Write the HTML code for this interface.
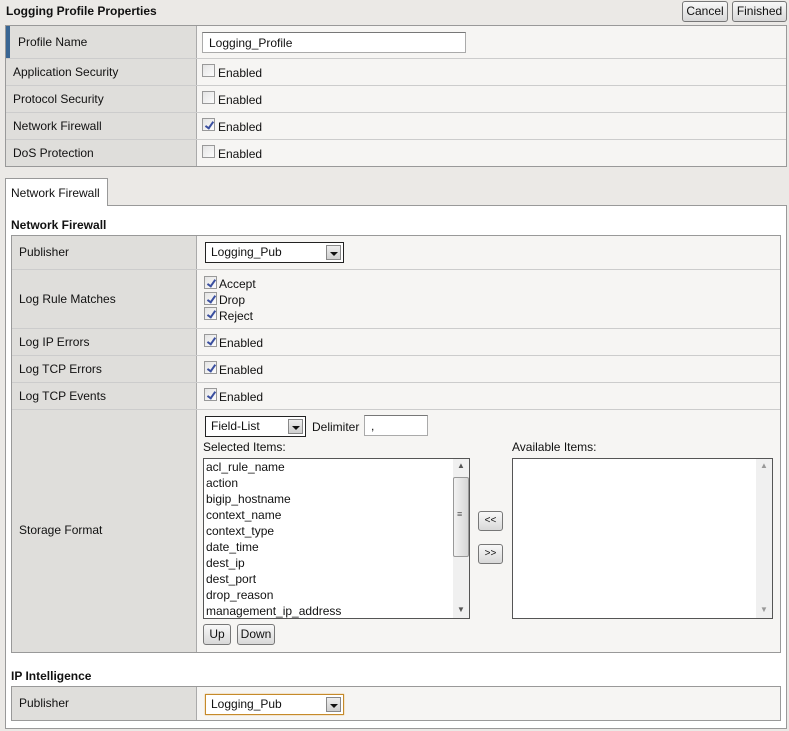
<!DOCTYPE html>
<html><head><meta charset="utf-8"><style>
*{box-sizing:border-box;margin:0;padding:0}
body{width:789px;height:731px;background:#ebe9e6;font-family:"Liberation Sans",Arial,sans-serif;font-size:12px;color:#111;position:relative;overflow:hidden}
.a{position:absolute}
.t{position:absolute;white-space:nowrap}
.btn{position:absolute;border:1px solid #777;border-radius:3px;background:linear-gradient(#f8f8f8,#d8d8d8);font-size:12px;text-align:center;line-height:18px;color:#111}
.cb{position:absolute;width:13px;height:13px;border:1px solid #999;background:linear-gradient(135deg,#e4e4e4,#fcfcfc)}
.cb.on::after{content:"";position:absolute;left:4px;top:1px;width:3px;height:7px;border:solid #3a4f9f;border-width:0 2px 2px 0;transform:rotate(35deg)}
.sel{position:absolute;border:1px solid #222;background:#fff;padding-left:5px;line-height:18px}
.sel .ar{position:absolute;right:2px;top:2px;width:15px;bottom:2px;background:linear-gradient(#eee,#cfcfcf);border:1px solid #888}
.sel .ar::after{content:"";position:absolute;left:3px;top:6px;border:4px solid transparent;border-top:4px solid #111;border-bottom:0}
.hl{position:absolute;height:1px;background:#ccc}
</style></head><body>
<div class="t" style="left:6px;top:4px;font-weight:bold">Logging Profile Properties</div>
<div class="btn" style="left:682px;top:1px;width:46px;height:21px">Cancel</div>
<div class="btn" style="left:732px;top:1px;width:55px;height:21px">Finished</div>

<div class="a" style="left:5px;top:25px;width:782px;height:142px;border:1px solid #999;background:#f6f5f3"></div>
<div class="a" style="left:6px;top:26px;width:191px;height:140px;background:#dfdedb;border-right:1px solid #aaa"></div>
<div class="a" style="left:6px;top:26px;width:4px;height:32px;background:#3a6694"></div>
<div class="hl" style="left:6px;top:58px;width:780px"></div>
<div class="hl" style="left:6px;top:85px;width:780px"></div>
<div class="hl" style="left:6px;top:112px;width:780px"></div>
<div class="hl" style="left:6px;top:139px;width:780px"></div>
<div class="t" style="left:18px;top:35px">Profile Name</div>
<div class="a" style="left:202px;top:32px;width:264px;height:21px;border:1px solid #aaa;border-top-color:#777;background:#fff"></div>
<div class="t" style="left:209px;top:36px">Logging_Profile</div>
<div class="t" style="left:13px;top:65px">Application Security</div>
<div class="t" style="left:13px;top:92px">Protocol Security</div>
<div class="t" style="left:13px;top:119px">Network Firewall</div>
<div class="t" style="left:13px;top:146px">DoS Protection</div>
<div class="cb" style="left:202px;top:64px"></div><div class="t" style="left:218px;top:66px">Enabled</div>
<div class="cb" style="left:202px;top:91px"></div><div class="t" style="left:218px;top:93px">Enabled</div>
<div class="cb on" style="left:202px;top:118px"></div><div class="t" style="left:218px;top:120px">Enabled</div>
<div class="cb" style="left:202px;top:145px"></div><div class="t" style="left:218px;top:147px">Enabled</div>

<div class="a" style="left:5px;top:205px;width:782px;height:524px;border:1px solid #999;background:#fff"></div>
<div class="a" style="left:5px;top:178px;width:103px;height:28px;border:1px solid #999;border-bottom:none;background:#fff"></div>
<div class="t" style="left:11px;top:186px">Network Firewall</div>
<div class="t" style="left:11px;top:218px;font-weight:bold">Network Firewall</div>

<div class="a" style="left:11px;top:235px;width:770px;height:418px;border:1px solid #999;background:#f6f5f3"></div>
<div class="a" style="left:12px;top:236px;width:185px;height:416px;background:#dfdedb;border-right:1px solid #aaa"></div>
<div class="hl" style="left:12px;top:269px;width:768px"></div>
<div class="hl" style="left:12px;top:328px;width:768px"></div>
<div class="hl" style="left:12px;top:355px;width:768px"></div>
<div class="hl" style="left:12px;top:382px;width:768px"></div>
<div class="hl" style="left:12px;top:409px;width:768px"></div>
<div class="t" style="left:19px;top:245px">Publisher</div>
<div class="sel" style="left:205px;top:242px;width:139px;height:21px">Logging_Pub<div class="ar"></div></div>
<div class="t" style="left:19px;top:292px">Log Rule Matches</div>
<div class="cb on" style="left:204px;top:276px"></div><div class="t" style="left:219px;top:277px">Accept</div>
<div class="cb on" style="left:204px;top:292px"></div><div class="t" style="left:219px;top:293px">Drop</div>
<div class="cb on" style="left:204px;top:307px"></div><div class="t" style="left:219px;top:309px">Reject</div>
<div class="t" style="left:19px;top:335px">Log IP Errors</div>
<div class="t" style="left:19px;top:362px">Log TCP Errors</div>
<div class="t" style="left:19px;top:389px">Log TCP Events</div>
<div class="cb on" style="left:204px;top:334px"></div><div class="t" style="left:219px;top:336px">Enabled</div>
<div class="cb on" style="left:204px;top:361px"></div><div class="t" style="left:219px;top:363px">Enabled</div>
<div class="cb on" style="left:204px;top:388px"></div><div class="t" style="left:219px;top:390px">Enabled</div>
<div class="t" style="left:19px;top:523px">Storage Format</div>
<div class="sel" style="left:205px;top:416px;width:101px;height:21px">Field-List<div class="ar"></div></div>
<div class="t" style="left:312px;top:420px">Delimiter</div>
<div class="a" style="left:364px;top:415px;width:64px;height:21px;border:1px solid #aaa;border-top-color:#777;background:#fff"></div>
<div class="t" style="left:371px;top:419px">,</div>
<div class="t" style="left:203px;top:440px">Selected Items:</div>
<div class="t" style="left:512px;top:440px">Available Items:</div>
<div class="a" style="left:203px;top:458px;width:267px;height:161px;border:1px solid #555;background:#fff"></div>
<div class="a" style="left:453px;top:459px;width:16px;height:159px;background:#f0f0f0"></div>
<div class="a" style="left:453px;top:477px;width:16px;height:80px;background:linear-gradient(90deg,#f2f2f2,#d6d6d6);border:1px solid #999;border-radius:2px"></div>
<div class="t" style="left:457px;top:509px;font-size:9px;color:#555">≡</div>
<div class="t" style="left:457px;top:461px;font-size:8px;color:#555">▲</div>
<div class="t" style="left:457px;top:605px;font-size:8px;color:#555">▼</div>
<div class="a" style="left:206px;top:459px;line-height:16px">acl_rule_name<br>action<br>bigip_hostname<br>context_name<br>context_type<br>date_time<br>dest_ip<br>dest_port<br>drop_reason<br>management_ip_address</div>
<div class="a" style="left:512px;top:458px;width:261px;height:161px;border:1px solid #555;background:#fff"></div>
<div class="a" style="left:756px;top:459px;width:16px;height:159px;background:#f0f0f0"></div>
<div class="t" style="left:760px;top:461px;font-size:8px;color:#999">▲</div>
<div class="t" style="left:760px;top:605px;font-size:8px;color:#999">▼</div>
<div class="btn" style="left:478px;top:511px;width:25px;height:20px;font-size:10px">&lt;&lt;</div>
<div class="btn" style="left:478px;top:544px;width:25px;height:20px;font-size:10px">&gt;&gt;</div>
<div class="btn" style="left:203px;top:624px;width:28px;height:21px">Up</div>
<div class="btn" style="left:237px;top:624px;width:38px;height:21px">Down</div>

<div class="t" style="left:11px;top:669px;font-weight:bold">IP Intelligence</div>
<div class="a" style="left:11px;top:686px;width:770px;height:35px;border:1px solid #999;background:#f6f5f3"></div>
<div class="a" style="left:12px;top:687px;width:185px;height:33px;background:#dfdedb;border-right:1px solid #aaa"></div>
<div class="t" style="left:19px;top:696px">Publisher</div>
<div class="sel" style="left:205px;top:694px;width:139px;height:21px;border-color:#c58a2a;box-shadow:0 0 1px #e0a040">Logging_Pub<div class="ar"></div></div>
</body></html>
